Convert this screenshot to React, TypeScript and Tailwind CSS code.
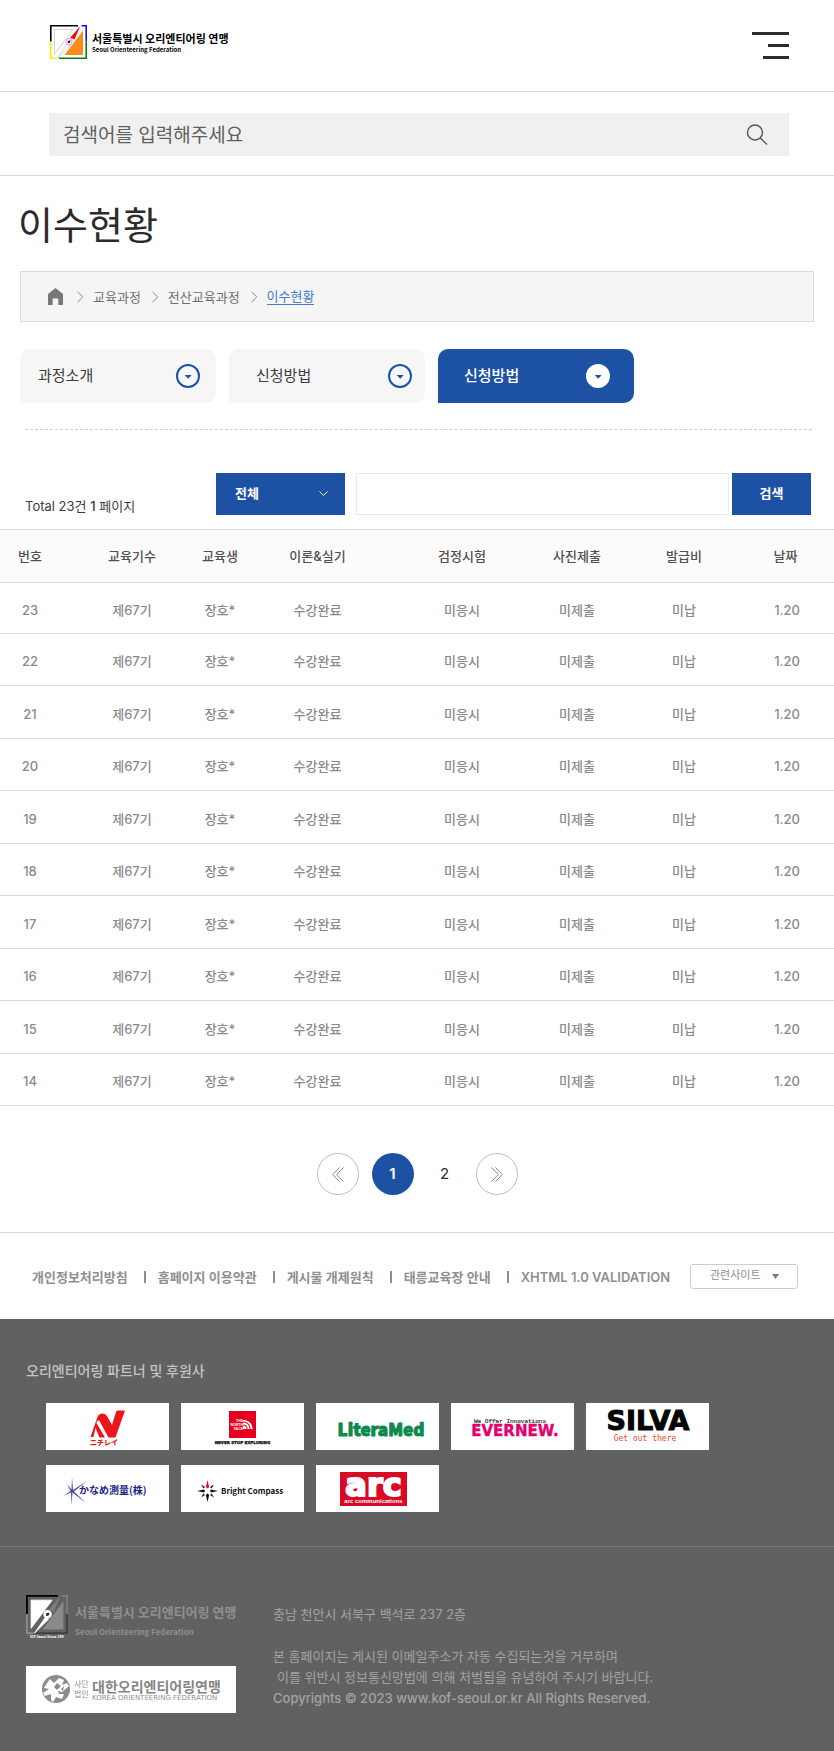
import React from "react";

const BLUE = "#1c51a4";
const KR = "'Noto Sans CJK KR', sans-serif";
const JP = "'Noto Sans CJK JP', sans-serif";

type EmblemColors = {
  topLeft: string;
  topRight: string;
  bottomLeft: string;
  bottomRight: string;
  paper: string;
  paperLine: string;
  triangle: string;
  needle: string;
  hub: string;
};

const brightEmblem: EmblemColors = {
  topLeft: "#000000",
  topRight: "#1010f0",
  bottomLeft: "#f8f000",
  bottomRight: "#0a7d12",
  paper: "#ffffff",
  paperLine: "#c9c9c9",
  triangle: "#fb8c1c",
  needle: "#f40a0a",
  hub: "#f08ae8",
};

const grayEmblem: EmblemColors = {
  topLeft: "#000000",
  topRight: "#7d7d7d",
  bottomLeft: "#8c8c8c",
  bottomRight: "#3f3f3f",
  paper: "#ffffff",
  paperLine: "#ffffff",
  triangle: "#8a8a8a",
  needle: "#7d7d7d",
  hub: "#ffffff",
};

function Emblem({ colors, className }: { colors: EmblemColors; className: string }) {
  return (
    <svg viewBox="0 0 37 34" className={className} aria-hidden="true" preserveAspectRatio="none">
      <path d="M28 .8H.8V16.5" fill="none" stroke={colors.topLeft} strokeWidth="1.6" />
      <path d="M.8 16.5V33.2H6.5" fill="none" stroke={colors.bottomLeft} strokeWidth="1.6" />
      <path d="M31.5 .8H36.2V16.5" fill="none" stroke={colors.topRight} strokeWidth="1.6" />
      <path d="M36.2 16.5V33.2H9" fill="none" stroke={colors.bottomRight} strokeWidth="1.6" />
      <path d="M4.5 4.5H23L4.5 29Z" fill={colors.paper} stroke={colors.paperLine} strokeWidth=".8" />
      <path d="M33 5.5V30H14.5Z" fill={colors.triangle} />
      <path d="M30.500 .8L24.500 14.500L20.200 12.800Z" fill={colors.needle} />
      <path d="M17 19.500L20 21L7.500 33.200Z" fill={colors.paper} stroke={colors.paperLine} strokeWidth=".7" />
      <circle cx="19" cy="16.800" r="3.200" fill="#ffffff" stroke={colors.hub} strokeWidth="1" />
      <path d="M17.500 18.300L18 15.800L20.700 15.500L20 17.800Z" fill="#222222" />
    </svg>
  );
}

function CircleArrow({ filled }: { filled?: boolean }) {
  return (
    <svg viewBox="0 0 24 24" className="size-6 shrink-0" aria-hidden="true">
      <circle cx="12" cy="12" r="11" fill={filled ? "#ffffff" : "none"} stroke={filled ? "#ffffff" : BLUE} strokeWidth="2" />
      <path d="M8.700 11H15.700L12.200 14.800Z" fill={BLUE} />
    </svg>
  );
}

function Crumb({ children }: { children: React.ReactNode }) {
  return (
    <li className="flex items-center">
      <svg viewBox="0 0 8 12" className="mr-[9px] h-3 w-2" fill="none" stroke="#8a8a8a" aria-hidden="true">
        <path d="M1.500 .8L6.800 6L1.500 11.200" />
      </svg>
      {children}
    </li>
  );
}

const headings = ["번호", "교육기수", "교육생", "이론&실기", "검정시험", "사진제출", "발급비", "날짜"];
const records = [23, 22, 21, 20, 19, 18, 17, 16, 15, 14].map((no) => [
  String(no), "제67기", "장호*", "수강완료", "미응시", "미제출", "미납", "1.20",
]);

const policies = ["개인정보처리방침", "홈페이지 이용약관", "게시물 개제원칙", "태릉교육장 안내", "XHTML 1.0 VALIDATION"];

const card = "h-[47px] w-[123px] bg-white";

function Partners() {
  return (
    <ul className="mt-[21px] ml-5 grid max-w-[680px] grid-cols-[repeat(auto-fill,123px)] gap-x-3 gap-y-[15px]">
      <li>
        <svg viewBox="0 0 123 47" className={card} role="img" aria-label="ニチレイ">
          <path d="M44.500 34L51.500 14C53 10 58 9 61 13L66 22L70 9C70.500 8 71 7.500 72 7.500H79L69.500 34.500H62.500L54 19C52.500 16 50.500 18 50.500 20L59 34.500H53.500L49.500 25L47.500 34Z" fill="#ee141c" />
          <text x="44" y="42" fontSize="7" fontWeight="900" fill="#ee141c" fontFamily={JP}>ニチレイ</text>
        </svg>
      </li>
      <li>
        <svg viewBox="0 0 123 47" className={card} role="img" aria-label="The North Face">
          <rect x="48" y="8" width="27" height="27" fill="#e60020" />
          <path d="M62 17C67 17 71.500 20 71.500 26H69.500C69.500 21 66 18.500 62 18.500Z" fill="#fff" />
          <path d="M62 19.500C66 19.500 68.500 22 68.500 26H66.500C66.500 23 65 21.500 62 21.500Z" fill="#fff" />
          <path d="M62 22.500C64.500 22.500 65.500 24 65.500 26H62Z" fill="#fff" />
          <g fill="#fff" fontFamily="'Liberation Sans', sans-serif" fontWeight="700" fontSize="3.500" textAnchor="end">
            <text x="62" y="18.500">THE</text>
            <text x="62" y="22.500">NORTH</text>
            <text x="62" y="26.500">FACE</text>
          </g>
          <text x="61.500" y="41" fontSize="4" fontWeight="900" textAnchor="middle" fill="#111" stroke="#111" strokeWidth=".3" fontFamily="'DejaVu Sans', sans-serif">NEVER STOP EXPLORING</text>
        </svg>
      </li>
      <li>
        <svg viewBox="0 0 123 47" className={card} role="img" aria-label="LiteraMed">
          <text x="65" y="33" fontSize="17" textAnchor="middle" fontWeight="900" fill="#0a8a4c" stroke="#0a8a4c" strokeWidth="1" fontFamily={KR}>LiteraMed</text>
        </svg>
      </li>
      <li>
        <svg viewBox="0 0 123 47" className={card} role="img" aria-label="Evernew">
          <text x="59" y="20" fontSize="6" textAnchor="middle" fill="#333" stroke="#333" strokeWidth=".2" fontFamily="'Liberation Mono', monospace">We Offer Innovations</text>
          <text x="64" y="33" fontSize="15" textAnchor="middle" fontWeight="700" fill="#e5006e" stroke="#e5006e" strokeWidth=".4" fontFamily="'DejaVu Sans', sans-serif">EVERNEW.</text>
        </svg>
      </li>
      <li>
        <svg viewBox="0 0 123 47" className={card} role="img" aria-label="Silva">
          <text x="62" y="27" fontSize="27" textAnchor="middle" fontWeight="700" fill="#050505" stroke="#050505" strokeWidth="1" fontFamily="'DejaVu Sans', sans-serif">SILVA</text>
          <text x="59" y="38" fontSize="8" textAnchor="middle" fill="#f04a1c" fontFamily="'DejaVu Sans Mono', monospace">Get out there</text>
        </svg>
      </li>
      <li>
        <svg viewBox="0 0 123 47" className={card} role="img" aria-label="かなめ測量(株)">
          <path d="M26 12L27 25L41 16L28 26.500L40 38L26.500 27.500L25.500 40L25 27.500L17 31L24.500 26L21 19L25.500 24.500Z" fill="#4b4fa8" />
          <text x="33" y="29" fontSize="10" fontWeight="700" fill="#1d1e86" fontFamily={JP}>かなめ測量(株)</text>
        </svg>
      </li>
      <li>
        <svg viewBox="0 0 123 47" className={card} role="img" aria-label="Bright Compass">
          <path d="M26.500 15L28.200 22L26.500 23.500L24.800 22Z" fill="#e01020" />
          <g fill="#111">
            <path d="M26.500 37L28.200 30L26.500 28.500L24.800 30Z" />
            <path d="M16 26L23 24.500L24 26L23 27.500Z" />
            <path d="M37 26L30 24.500L29 26L30 27.500Z" />
            <path d="M20 19.500L24 22L22.500 23.500ZM33 19.500L29 22L30.500 23.500ZM20 32.500L24 30L22.500 28.500ZM33 32.500L29 30L30.500 28.500Z" />
          </g>
          <text x="40" y="29" fontSize="8" fontWeight="700" fill="#111" fontFamily={KR}>Bright Compass</text>
        </svg>
      </li>
      <li>
        <svg viewBox="0 0 123 47" className={card} role="img" aria-label="arc communications">
          <rect x="24" y="7" width="67" height="34" fill="#d80a24" />
          <text x="57.500" y="31" fontSize="32" textAnchor="middle" fontWeight="700" fill="#fff" stroke="#fff" strokeWidth="2" fontFamily="'DejaVu Sans', sans-serif">arc</text>
          <text x="57.500" y="38" fontSize="6" textAnchor="middle" fontWeight="700" fill="#fff" fontFamily="'Liberation Sans', sans-serif">arc communications</text>
        </svg>
      </li>
    </ul>
  );
}

export default function App() {
  return (
    <div className="min-h-screen bg-white font-['Inter','Noto_Sans_CJK_KR',sans-serif] text-[13px] leading-5 text-[#3c3c3c]">
      <header>
        <div className="flex h-[92px] items-start justify-between border-b border-[#d9d9d9] pr-[45px] pl-[50px]">
          <a href="#home" className="mt-[25px] flex gap-[5px] font-['Noto_Sans_CJK_KR',sans-serif] font-bold text-black">
            <Emblem colors={brightEmblem} className="h-[34px] w-[37px]" />
            <span className="flex flex-col pt-1.5">
              <span className="text-[11px] leading-[14px]">서울특별시 오리엔티어링 연맹</span>
              <span className="text-[6px] leading-[10px]">Seoul Orienteering Federation</span>
            </span>
          </a>
          <button type="button" aria-label="메뉴 열기" className="mt-8 flex w-[37px] flex-col items-end gap-[9px]">
            <span className="h-[3px] w-full bg-[#2b2b2b]" />
            <span className="h-[3px] w-[21px] bg-[#2b2b2b]" />
            <span className="h-[3px] w-[26px] bg-[#2b2b2b]" />
          </button>
        </div>
        <form role="search" className="border-b border-[#d9d9d9] pt-[21px] pr-[45px] pb-[19px] pl-[49px]">
          <div className="flex h-[43px] items-center bg-[#f0f0f0] pr-5 pl-3.5">
            <input
              type="search"
              aria-label="검색어"
              placeholder="검색어를 입력해주세요"
              className="min-w-0 flex-1 bg-transparent pt-0.5 text-[19px] leading-7 outline-none placeholder:text-[#5f5f5f]"
            />
            <button type="button" aria-label="검색">
              <svg viewBox="0 0 24 24" className="size-6" fill="none" stroke="#555555" strokeWidth="1.4" aria-hidden="true">
                <circle cx="10" cy="9.500" r="7.500" />
                <path d="M15.300 15L22 21.500" />
              </svg>
            </button>
          </div>
        </form>
      </header>

      <main>
        <div className="px-5">
          <h1 className="-ml-0.5 pt-[22px] text-[38px] leading-[54px] text-[#2b2b2b]">이수현황</h1>
          <nav aria-label="현재 위치" className="mt-[19px] flex h-[51px] items-center border border-[#dcdcdc] bg-[#f5f5f5] px-[27px] text-[#707070]">
            <ol className="flex items-center gap-2.5">
              <li>
                <a href="#home" aria-label="홈">
                  <svg viewBox="0 0 15 17" className="mr-[3px] h-[17px] w-[15px]" fill="#777777" aria-hidden="true">
                    <path d="M7.500 0L15 6V17H10.300V10.500H4.700V17H0V6Z" />
                  </svg>
                </a>
              </li>
              <Crumb><a href="#education">교육과정</a></Crumb>
              <Crumb><a href="#computer">전산교육과정</a></Crumb>
              <Crumb><a href="#status" aria-current="page" className="border-b border-[#4a7bc8] leading-4 text-[#4a7bc8]">이수현황</a></Crumb>
            </ol>
          </nav>
          <div className="mt-[27px] flex gap-[13px] text-[15px]">
            <button type="button" className="flex h-[54px] w-[196px] items-center justify-between rounded-[10px] rounded-bl-none bg-[#f6f6f6] pr-4 pl-[18px]">
              과정소개 <CircleArrow />
            </button>
            <button type="button" className="flex h-[54px] w-[196px] items-center justify-between rounded-[10px] rounded-bl-none bg-[#f6f6f6] pr-[13px] pl-[27px]">
              신청방법 <CircleArrow />
            </button>
            <button type="button" className="flex h-[54px] w-[196px] items-center justify-between rounded-[10px] rounded-bl-none bg-[#1c51a4] pr-6 pl-[26px] font-medium text-white">
              신청방법 <CircleArrow filled />
            </button>
          </div>
          <div className="mt-[26px] mr-0.5 ml-[5px] border-t border-dashed border-[#cfcfcf]" />
        </div>

        <form className="mt-[43px] mb-[13px] flex items-start pr-[23px] pl-[25px]">
          <p className="w-[191px] pt-[23px]">Total 23건 <span className="font-medium">1</span> 페이지</p>
          <div className="relative w-[129px]">
            <select aria-label="검색 구분" defaultValue="all" className="block h-[42px] w-full appearance-none bg-[#1c51a4] pb-0.5 pl-[19px] font-bold text-white outline-none">
              <option value="all">전체</option>
            </select>
            <svg viewBox="0 0 9 5" className="pointer-events-none absolute top-[18px] right-[17px] h-[5px] w-[9px]" fill="none" stroke="#ffffff" aria-hidden="true">
              <path d="M.5 .5L4.500 4.500L8.500 .5" />
            </svg>
          </div>
          <input type="text" aria-label="검색어" className="ml-[11px] h-[42px] min-w-0 flex-1 border border-[#ebebeb] px-3 outline-none" />
          <button type="button" className="ml-[3px] h-[42px] w-[79px] bg-[#1c51a4] pb-0.5 font-bold text-white">검색</button>
        </form>

        <table className="w-full table-fixed border-collapse text-center">
          <colgroup>
            <col className="w-[80px]" />
            <col className="w-[104px]" />
            <col className="w-[72px]" />
            <col className="w-[123px]" />
            <col className="w-[166px]" />
            <col className="w-[64px]" />
            <col className="w-[150px]" />
            <col className="w-[75px]" />
          </colgroup>
          <thead>
            <tr className="h-[53px] border-y border-[#dadada] bg-[#fbfbfb] text-[#505050]">
              {headings.map((h) => (
                <th key={h} scope="col" className="font-medium first:pr-5 last:pr-[22px]">{h}</th>
              ))}
            </tr>
          </thead>
          <tbody className="font-medium text-[#8a8a8a]">
            {records.map((row) => (
              <tr key={row[0]} className="h-[53px] border-b border-[#dadada] first:h-[51px] even:h-[52px]">
                {row.map((cell, i) => (
                  <td key={i} className="pt-[3px] first:pr-5 last:pr-[19px]">{cell}</td>
                ))}
              </tr>
            ))}
          </tbody>
        </table>

        <nav aria-label="페이지" className="mt-[47px] flex items-center justify-center gap-[13px] text-[15px] text-[#2b2b2b]">
          <button type="button" aria-label="이전" className="flex size-[42px] items-center justify-center rounded-full border border-[#bdbdbd]">
            <svg viewBox="0 0 12 15" className="h-[15px] w-3" fill="none" stroke="#6a6a6a" strokeWidth=".8" aria-hidden="true">
              <path d="M7.500 .5L.7 7.500L7.500 14.500M11.500 .5L4.700 7.500L11.500 14.500" />
            </svg>
          </button>
          <button type="button" aria-current="page" className="size-[42px] rounded-full bg-[#1c51a4] font-semibold text-white">1</button>
          <button type="button" className="h-[42px] w-9">2</button>
          <button type="button" aria-label="다음" className="flex size-[42px] items-center justify-center rounded-full border border-[#bdbdbd]">
            <svg viewBox="0 0 12 15" className="h-[15px] w-3" fill="none" stroke="#6a6a6a" strokeWidth=".8" aria-hidden="true">
              <path d="M.5 .5L7.300 7.500L.5 14.500M4.500 .5L11.300 7.500L4.500 14.500" />
            </svg>
          </button>
        </nav>
      </main>

      <footer className="mt-[37px]">
        <div className="flex h-[87px] items-start justify-between border-t border-[#d9d9d9] pt-[31px] pr-9 pl-8 text-[#8f8f8f]">
          <ul className="flex items-center pt-[3px] font-semibold">
            {policies.map((p, i) => (
              <li key={p} className="flex items-center whitespace-nowrap">
                {i > 0 && <span className="mr-3 ml-4 h-3 w-[2px] bg-[#8f8f8f]" />}
                <a href="#policy">{p}</a>
              </li>
            ))}
          </ul>
          <div className="relative w-[108px]">
            <select aria-label="관련사이트" defaultValue="sites" className="block h-[25px] w-full appearance-none rounded-[3px] border border-[#cccccc] bg-white pb-1 pl-[19px] text-[11px] leading-4 outline-none">
              <option value="sites">관련사이트</option>
            </select>
            <svg viewBox="0 0 7 5" className="pointer-events-none absolute top-2.5 right-[19px] h-[5px] w-[7px]" fill="#777777" aria-hidden="true">
              <path d="M0 0H7L3.500 5Z" />
            </svg>
          </div>
        </div>

        <div className="bg-[#616161] text-[#a3a3a3]">
          <section className="border-b border-[#777777] px-[26px] pt-[41px] pb-[34px]">
            <h2 className="text-sm leading-[22px] font-medium text-[#c4c4c4]">오리엔티어링 파트너 및 후원사</h2>
            <Partners />
          </section>
          <section className="flex gap-[37px] px-[26px] pt-12 pb-[39px]">
            <div className="w-[210px]">
              <div className="flex gap-[7px] font-['Noto_Sans_CJK_KR',sans-serif] font-bold text-[#8f8f8f]">
                <div className="flex flex-col items-center">
                  <Emblem colors={grayEmblem} className="h-[39px] w-[42px]" />
                  <svg viewBox="0 0 34 5" className="h-[5px] w-[34px]" aria-hidden="true">
                    <text x="17" y="4" fontSize="3.500" textAnchor="middle" fill="#ffffff" fontWeight="700" fontFamily={KR}>KOF Seoul Since 1984</text>
                  </svg>
                </div>
                <p className="flex flex-col pt-[7px] whitespace-nowrap">
                  <span>서울특별시 오리엔티어링 연맹</span>
                  <span className="text-[8px]">Seoul Orienteering Federation</span>
                </p>
              </div>
              <svg viewBox="0 0 210 47" className="mt-6 h-[47px] w-[210px] bg-white" role="img" aria-label="대한오리엔티어링연맹">
                <circle cx="30" cy="23" r="14" fill="#8c8c8c" />
                <path d="M21 17L24 13L28 17L33 12L38 14L36 19L41 17L43 20L36 26L32 25L33 28L38 28L36 33L30 31L27 36L25 34L25 28L19 30L17 27L23 23L18 22Z" fill="#ffffff" />
                <path d="M31 17L28 21L31 24L35 20ZM38 20L35 23L37 25Z" fill="#8c8c8c" />
                <g fontFamily={KR} fill="#8f8f8f">
                  <text x="48" y="21" fontSize="8">사단</text>
                  <text x="48" y="31" fontSize="8">법인</text>
                  <text x="66" y="26" fontSize="14" fontWeight="700" fill="#858585">대한오리엔티어링연맹</text>
                  <text x="66" y="34" fontSize="7" fontFamily="'DejaVu Sans', sans-serif">KOREA ORIENTEERING FEDERATION</text>
                </g>
              </svg>
            </div>
            <div className="pt-[9px] leading-[21px]">
              <address className="not-italic">충남 천안시 서북구 백석로 237 2층</address>
              <p className="mt-[21px]">본 홈페이지는 게시된 이메일주소가 자동 수집되는것을 거부하며</p>
              <p className="pl-1">이를 위반시 정보통신망법에 의해 처벌됨을 유념하여 주시기 바랍니다.</p>
              <p className="font-medium">Copyrights © 2023 www.kof-seoul.or.kr All Rights Reserved.</p>
            </div>
          </section>
        </div>
      </footer>
    </div>
  );
}
